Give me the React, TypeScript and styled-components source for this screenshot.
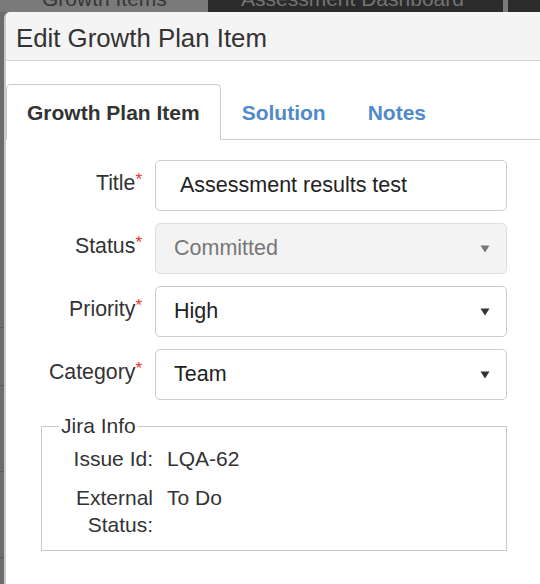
import React from 'react';
import styled, { createGlobalStyle, css } from 'styled-components';

// Edit Growth Plan Item modal, shown over the app page

const GlobalStyle = createGlobalStyle`
  html, body {
    margin: 0;
    padding: 0;
    overflow: hidden;
    background-color: #6c6c6c;
    font-family: 'Liberation Sans', Arial, Helvetica, sans-serif;
    color: #333;
  }
`;

const Backdrop = styled.div`
  display: flex;
  flex-direction: column;
  min-height: 100vh;
  background-color: #6c6c6c;
`;

const TopNav = styled.nav`
  display: flex;
  height: 12px;
  overflow: hidden;
  background-color: #2b2b2b;
`;

const NavTab = styled.div<{ $active?: boolean; $width: number; $pad: number }>`
  width: ${(p) => p.$width}px;
  padding-left: ${(p) => p.$pad}px;
  box-sizing: border-box;
  margin-top: -12px;
  height: 24px;
  font-size: 21px;
  line-height: 21px;
  white-space: nowrap;
  color: ${(p) => (p.$active ? '#363636' : '#747474')};
  background-color: ${(p) => (p.$active ? '#7a7a7a' : '#2b2b2b')};
`;

const NavSeparator = styled.div`
  width: 5px;
  background-color: #7a7a7a;
`;

const Stage = styled.div`
  display: flex;
  flex: 1;
`;

const Gutter = styled.div`
  width: 4px;
  flex-shrink: 0;
  background: linear-gradient(
    to bottom,
    #6c6c6c 0 315px,
    #575757 315px 316px,
    #6c6c6c 316px 373px,
    #575757 373px 374px,
    #6c6c6c 374px 459px,
    #575757 459px 460px,
    #6c6c6c 460px 545px,
    #575757 545px 546px,
    #6c6c6c 546px
  );
`;

const Modal = styled.div`
  flex: 1;
  display: flex;
  flex-direction: column;
  background-color: #fff;
  border-left: 2px solid #c9c9c9;
  border-top-left-radius: 6px;
  overflow: hidden;
`;

const ModalHeader = styled.header`
  height: 49px;
  display: flex;
  align-items: center;
  padding: 5px 0 0 10px;
  box-sizing: border-box;
  background-color: #f4f4f4;
  border-bottom: 1px solid #d6d6d6;
`;

const ModalTitle = styled.h4`
  margin: 0;
  font-size: 25.8px;
  font-weight: normal;
  color: #333;
`;

const ModalBody = styled.div`
  padding: 23px 33px 20px 0;
`;

const TabList = styled.ul`
  display: flex;
  list-style: none;
  margin: 0 -33px 0 0;
  padding: 0;
  border-bottom: 1px solid #cccccc;
`;

const Tab = styled.li<{ $active?: boolean }>`
  height: 53px;
  display: flex;
  align-items: center;
  padding: 1px 20px 0;
  margin-bottom: -1px;
  font-size: 21px;
  font-weight: bold;
  color: #4f8acb;
  border: 1px solid transparent;
  border-radius: 5px 5px 0 0;
  ${(p) =>
    p.$active &&
    css`
      color: #333;
      background-color: #fff;
      border-color: #cccccc;
      border-bottom-color: #fff;
    `}
`;

const Form = styled.div`
  display: grid;
  grid-template-columns: 136px 1fr;
  column-gap: 13px;
  row-gap: 12px;
  margin-top: 20px;
`;

const Label = styled.label`
  text-align: right;
  padding-top: 11px;
  font-size: 21.3px;
  line-height: 24px;
  color: #333;
  white-space: nowrap;
`;

const Required = styled.sup`
  color: #e8302a;
  font-size: 17px;
  vertical-align: top;
  line-height: 17px;
  margin-left: 0;
`;

const Field = styled.div<{ $disabled?: boolean; $pad: number }>`
  height: 51px;
  box-sizing: border-box;
  display: flex;
  align-items: center;
  justify-content: space-between;
  padding: 0 16px 0 ${(p) => p.$pad}px;
  font-size: 21.5px;
  border: 1px solid ${(p) => (p.$disabled ? '#dddddd' : '#cccccc')};
  border-radius: 5px;
  color: ${(p) => (p.$disabled ? '#777' : '#222')};
  background-color: ${(p) => (p.$disabled ? '#f3f3f3' : '#fff')};
`;

const Fieldset = styled.fieldset`
  margin: 14px 0 0 35px;
  padding: 7px 0 12px 0;
  border: 1px solid #c8c8c8;
  display: grid;
  grid-template-columns: 111px 1fr;
  column-gap: 14px;
  row-gap: 12px;
`;

const Legend = styled.legend`
  margin-left: 17px;
  padding: 0 2px;
  font-size: 21px;
  color: #333;
`;

const InfoLabel = styled.div`
  text-align: right;
  font-size: 21px;
  line-height: 27px;
  color: #333;
`;

const InfoValue = styled.div`
  font-size: 21px;
  line-height: 27px;
  color: #333;
`;

function Caret({ color }: { color: string }) {
  return (
    <svg width="10" height="8" viewBox="0 0 10 8">
      <path d="M0.5 0.5 L9.5 0.5 L5 7.5 Z" fill={color} />
    </svg>
  );
}

const fields = [
  { label: 'Title', value: 'Assessment results test', select: false, disabled: false, pad: 24 },
  { label: 'Status', value: 'Committed', select: true, disabled: true, pad: 18 },
  { label: 'Priority', value: 'High', select: true, disabled: false, pad: 18 },
  { label: 'Category', value: 'Team', select: true, disabled: false, pad: 18 },
];

function App() {
  return (
    <>
      <GlobalStyle />
      <Backdrop>
        <TopNav>
          <NavTab $active $width={208} $pad={42}>
            Growth Items
          </NavTab>
          <NavTab $width={295} $pad={33}>
            Assessment Dashboard
          </NavTab>
          <NavSeparator />
        </TopNav>
        <Stage>
          <Gutter />
          <Modal>
            <ModalHeader>
              <ModalTitle>Edit Growth Plan Item</ModalTitle>
            </ModalHeader>
            <ModalBody>
              <TabList>
                <Tab $active>Growth Plan Item</Tab>
                <Tab>Solution</Tab>
                <Tab>Notes</Tab>
              </TabList>
              <Form>
                {fields.map((f) => (
                  <React.Fragment key={f.label}>
                    <Label>
                      {f.label}
                      <Required>*</Required>
                    </Label>
                    <Field $disabled={f.disabled} $pad={f.pad}>
                      <span>{f.value}</span>
                      {f.select && <Caret color={f.disabled ? '#777' : '#333'} />}
                    </Field>
                  </React.Fragment>
                ))}
              </Form>
              <Fieldset>
                <Legend>Jira Info</Legend>
                <InfoLabel>Issue Id:</InfoLabel>
                <InfoValue>LQA-62</InfoValue>
                <InfoLabel>
                  External
                  <br />
                  Status:
                </InfoLabel>
                <InfoValue>To Do</InfoValue>
              </Fieldset>
            </ModalBody>
          </Modal>
        </Stage>
      </Backdrop>
    </>
  );
}

export default App;
